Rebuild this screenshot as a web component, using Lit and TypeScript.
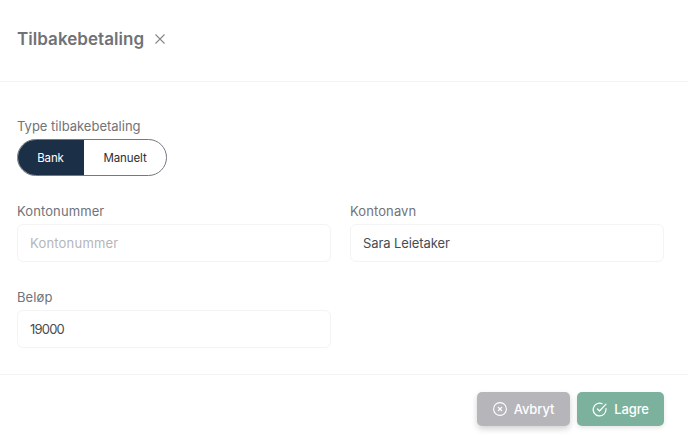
import { LitElement, html, css } from "lit";
import { customElement } from "lit/decorators.js";

@customElement("app-root")
export class AppRoot extends LitElement {
  static styles = css`
    :host { display: block; width: 688px; height: 437px; background: #fff; font-family: Inter, "Noto Sans", sans-serif; overflow: hidden; }
    * { box-sizing: border-box; }
    .header { height: 82px; border-bottom: 1px solid #f3f3f4; padding: 0 17px 4px; display: flex; align-items: center; gap: 10px; }
    h1 { margin: 0; font-size: 17px; font-weight: 600; color: #707277; letter-spacing: 0.05px; line-height: 24px; }
    .close { display: flex; margin-top: 1px; }
    .body { height: 292px; padding: 36px 24px 0 17px; display: flex; flex-direction: column; }
    label { display: block; font-size: 13px; line-height: 16px; color: #717378; letter-spacing: 0.1px; }
    label.type { letter-spacing: 0; }
    .toggle { display: flex; width: 150px; height: 37px; margin-top: 5px; border: 1px solid #747880; border-radius: 19px; overflow: hidden; font-size: 11.5px; letter-spacing: -0.1px; }
    .toggle span { display: flex; align-items: center; justify-content: center; color: #2c2e33; flex: 1; }
    .toggle .on { flex: none; width: 67px; background: #1b2f47; color: #fff; margin: -1px 0 -1px -1px; }
    .grid { display: grid; grid-template-columns: 314px 314px; column-gap: 19px; row-gap: 27px; margin-top: 27px; }
    .field label { margin-bottom: 5px; }
    .input { height: 38px; border: 1px solid #f4f4f5; border-radius: 6px; padding: 0 12px; display: flex; align-items: center; font-size: 13px; color: #4a4c50; letter-spacing: -0.1px; }
    .input.ph { color: #b5b6b9; letter-spacing: 0.2px; }
    .input.num { letter-spacing: -0.8px; }
    .footer { border-top: 1px solid #f3f3f4; height: 63px; padding: 17px 24px 0 0; display: flex; justify-content: flex-end; gap: 7px; }
    .btn { height: 34px; border: none; border-radius: 5px; display: flex; align-items: center; justify-content: center; gap: 7px; color: #fff; font: 500 13px Inter, sans-serif; letter-spacing: -0.1px; box-shadow: 0 3px 6px rgba(0,0,0,.18); padding: 0; }
    .cancel { width: 93px; background: #b5b5ba; }
    .save { width: 87px; background: #7cb29d; box-shadow: 0 2px 4px rgba(0,0,0,.1); }
  `;

  render() {
    return html`
      <div class="header">
        <h1>Tilbakebetaling</h1>
        <span class="close">
          <svg width="12" height="12" viewBox="0 0 12 12" fill="none" stroke="#85878b" stroke-width="1.1"><path d="M1.5 1.5l9 9M10.5 1.5l-9 9"/></svg>
        </span>
      </div>
      <div class="body">
        <label class="type">Type tilbakebetaling</label>
        <div class="toggle"><span class="on">Bank</span><span>Manuelt</span></div>
        <div class="grid">
          <div class="field"><label>Kontonummer</label><div class="input ph">Kontonummer</div></div>
          <div class="field"><label>Kontonavn</label><div class="input">Sara Leietaker</div></div>
          <div class="field"><label>Beløp</label><div class="input num">19000</div></div>
        </div>
      </div>
      <div class="footer">
        <button class="btn cancel">
          <svg width="14" height="14" viewBox="0 0 14 14" fill="none" stroke="#fff" stroke-width="1.1"><circle cx="7" cy="7" r="6.4"/><path d="M5 5l4 4M9 5l-4 4"/></svg>
          Avbryt
        </button>
        <button class="btn save">
          <svg width="15" height="15" viewBox="0 0 15 15" fill="none" stroke="#fff" stroke-width="1.2" stroke-linecap="round" stroke-linejoin="round"><path d="M14 6.5v1a6.4 6.4 0 1 1-3.8-5.8"/><path d="M14 2.2L7.5 9 5.5 7"/></svg>
          Lagre
        </button>
      </div>
    `;
  }
}
